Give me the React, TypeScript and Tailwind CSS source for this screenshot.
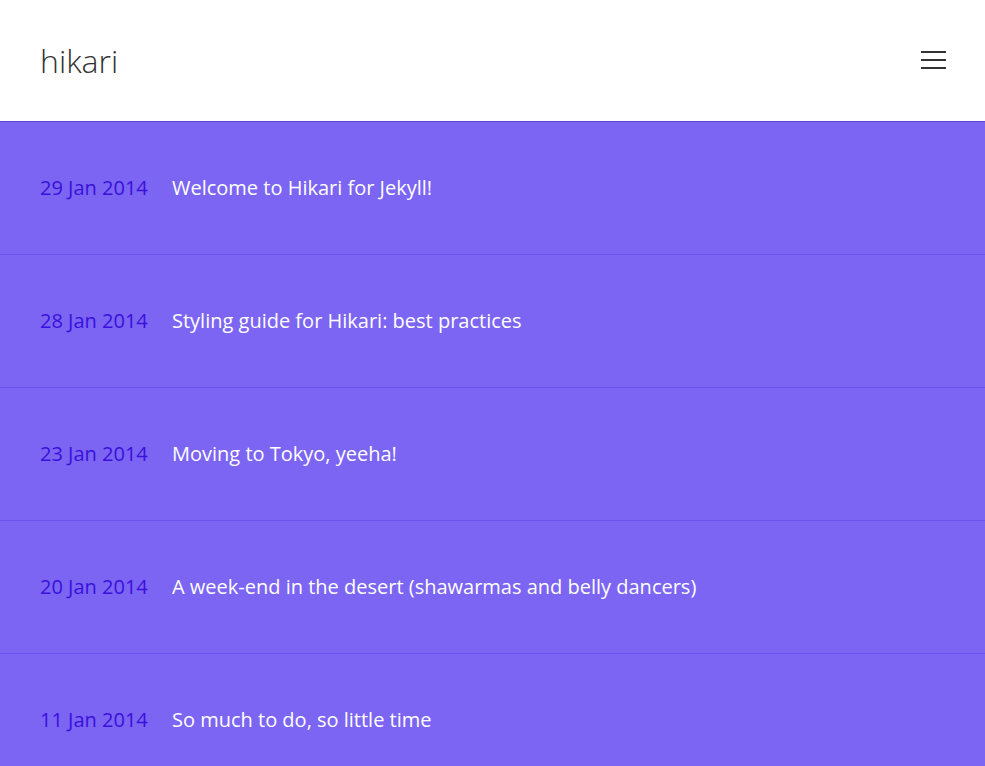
const posts = [
  { date: '29 Jan 2014', title: 'Welcome to Hikari for Jekyll!' },
  { date: '28 Jan 2014', title: 'Styling guide for Hikari: best practices' },
  { date: '23 Jan 2014', title: 'Moving to Tokyo, yeeha!' },
  { date: '20 Jan 2014', title: 'A week-end in the desert (shawarmas and belly dancers)' },
  { date: '11 Jan 2014', title: 'So much to do, so little time' },
];

export default function App() {
  return (
    <div className="min-h-screen bg-[#7b65f2] font-['Open_Sans',sans-serif]">
      <header className="flex h-[122px] items-center justify-between border-b border-[#5a44e0] bg-white pl-10 pr-[39px]">
        <a href="#" className="text-[32px] font-light leading-none text-[#333]">hikari</a>
        <button className="mb-[2px] flex w-[25px] flex-col gap-[6px]" aria-label="menu">
          <span className="block h-[2px] w-full bg-[#333]" />
          <span className="block h-[2px] w-full bg-[#333]" />
          <span className="block h-[2px] w-full bg-[#333]" />
        </button>
      </header>
      <ul>
        {posts.map((p) => (
          <li key={p.date} className="flex h-[133px] items-center border-b border-[#6a52ec] px-10 pb-px text-[20px]">
            <span className="w-[132px] shrink-0 text-[#3a10dc]">{p.date}</span>
            <a href="#" className="text-white">{p.title}</a>
          </li>
        ))}
      </ul>
    </div>
  );
}
